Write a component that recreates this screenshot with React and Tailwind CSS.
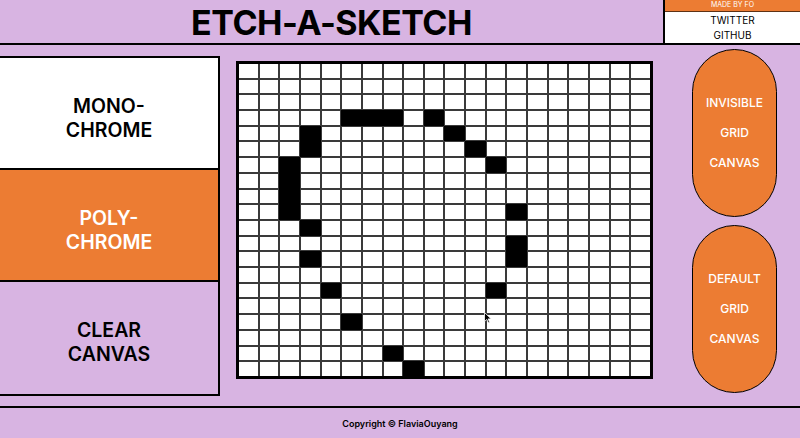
import React from "react";

const BLACK = {
  3: [5, 6, 7, 9],
  4: [3, 10],
  5: [3, 11],
  6: [2, 12],
  7: [2],
  8: [2],
  9: [2, 13],
  10: [3],
  11: [13],
  12: [3, 13],
  14: [4, 12],
  16: [5],
  18: [7],
  19: [8],
};

function Grid() {
  const cells = [];
  for (let r = 0; r < 20; r++) {
    for (let c = 0; c < 20; c++) {
      const on = (BLACK[r] || []).includes(c);
      cells.push(
        <div
          key={`${r}-${c}`}
          className={on ? "bg-black shadow-[0_0_0_1px_#000]" : "bg-white"}
        />
      );
    }
  }
  return (
    <div className="relative w-[417px] h-[318px] border-[3px] border-black bg-[#3a3a3a] grid grid-cols-[repeat(20,1fr)] grid-rows-[repeat(20,1fr)] gap-[2px]">
      {cells}
      <svg
        className="absolute left-[245px] top-[248px]"
        width="8"
        height="12"
        viewBox="0 0 8 12"
      >
        <path d="M0.5 0.5 L0.5 9.5 L2.8 7.4 L4.3 10.8 L5.6 10.2 L4.2 6.9 L7.2 6.9 Z" fill="#000" stroke="#fff" strokeWidth="0.8" />
      </svg>
    </div>
  );
}

function Pill({ lines }) {
  return (
    <button className="w-[85px] h-[168px] rounded-full bg-[#EC7C33] border border-black flex flex-col items-center justify-center text-white text-[12px] font-medium leading-[30px]">
      {lines.map((l) => (
        <span key={l}>{l}</span>
      ))}
    </button>
  );
}

export default function App() {
  return (
    <div
      className="w-[800px] h-[438px] bg-[#D8B4E2] flex flex-col overflow-hidden text-black"
      style={{ fontFamily: "Inter, 'Liberation Sans', Arial, sans-serif" }}
    >
      {/* Header */}
      <header className="h-[45px] flex border-b-2 border-black shrink-0">
        <div className="flex-1 flex items-center justify-center">
          <h1 className="text-[34px] font-bold tracking-[-0.5px] leading-none pt-[2px]">
            ETCH-A-SKETCH
          </h1>
        </div>
        <div className="w-[137px] border-l-2 border-black bg-white flex flex-col">
          <div className="h-[12px] bg-[#EC7C33] text-white text-[7px] flex items-center justify-center border-b border-black/60">
            MADE BY FO
          </div>
          <a className="h-[15px] flex items-center justify-center text-[10px] pt-[1px]">
            TWITTER
          </a>
          <a className="h-[15px] flex items-center justify-center text-[10px] pt-[1px]">
            GITHUB
          </a>
        </div>
      </header>

      {/* Main */}
      <main className="flex-1 flex items-start">
        <div className="mt-[11px] w-[220px] border-2 border-l-0 border-black flex flex-col divide-y-2 divide-black">
          <button className="h-[112px] pt-[9px] bg-white flex flex-col items-center justify-center text-[19.5px] font-semibold leading-[24px] text-black">
            <span>MONO-</span>
            <span>CHROME</span>
          </button>
          <button className="h-[112px] pt-[9px] bg-[#EC7C33] flex flex-col items-center justify-center text-[19.5px] font-semibold leading-[24px] text-white">
            <span>POLY-</span>
            <span>CHROME</span>
          </button>
          <button className="h-[112px] pt-[7px] flex flex-col items-center justify-center text-[19.5px] font-semibold leading-[24px] text-black">
            <span>CLEAR</span>
            <span>CANVAS</span>
          </button>
        </div>

        <div className="ml-[16px] mt-[16px]">
          <Grid />
        </div>

        <div className="ml-[39px] mt-[4px] flex flex-col gap-[8px]">
          <Pill lines={["INVISIBLE", "GRID", "CANVAS"]} />
          <Pill lines={["DEFAULT", "GRID", "CANVAS"]} />
        </div>
      </main>

      {/* Footer */}
      <footer className="h-[32px] border-t-2 border-black flex items-center justify-center shrink-0">
        <span className="text-[9px] font-semibold pt-[1px]">Copyright © FlaviaOuyang</span>
      </footer>
    </div>
  );
}
